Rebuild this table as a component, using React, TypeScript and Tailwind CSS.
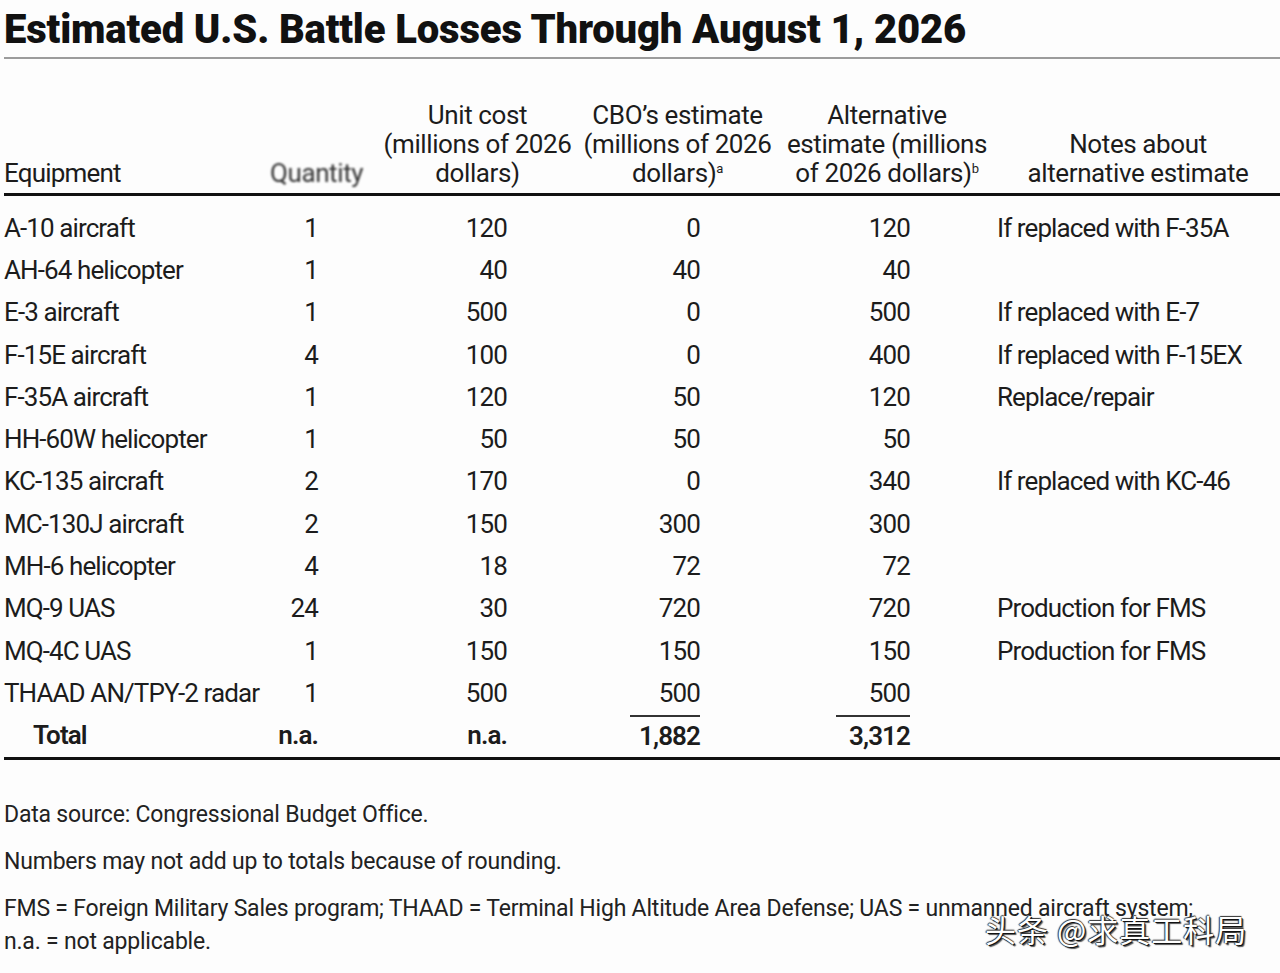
type Row = {
  name: string;
  qty: string;
  unit: string;
  cbo: string;
  alt: string;
  note?: string;
};

const rows: Row[] = [
  { name: "A-10 aircraft", qty: "1", unit: "120", cbo: "0", alt: "120", note: "If replaced with F-35A" },
  { name: "AH-64 helicopter", qty: "1", unit: "40", cbo: "40", alt: "40" },
  { name: "E-3 aircraft", qty: "1", unit: "500", cbo: "0", alt: "500", note: "If replaced with E-7" },
  { name: "F-15E aircraft", qty: "4", unit: "100", cbo: "0", alt: "400", note: "If replaced with F-15EX" },
  { name: "F-35A aircraft", qty: "1", unit: "120", cbo: "50", alt: "120", note: "Replace/repair" },
  { name: "HH-60W helicopter", qty: "1", unit: "50", cbo: "50", alt: "50" },
  { name: "KC-135 aircraft", qty: "2", unit: "170", cbo: "0", alt: "340", note: "If replaced with KC-46" },
  { name: "MC-130J aircraft", qty: "2", unit: "150", cbo: "300", alt: "300" },
  { name: "MH-6 helicopter", qty: "4", unit: "18", cbo: "72", alt: "72" },
  { name: "MQ-9 UAS", qty: "24", unit: "30", cbo: "720", alt: "720", note: "Production for FMS" },
  { name: "MQ-4C UAS", qty: "1", unit: "150", cbo: "150", alt: "150", note: "Production for FMS" },
  { name: "THAAD AN/TPY-2 radar", qty: "1", unit: "500", cbo: "500", alt: "500" },
];

const grid = "grid grid-cols-[266px_108px_199px_201px_218px_284px]";

export default function App() {
  return (
    <div
      className="relative min-h-[973px] w-[1280px] overflow-hidden bg-[#fdfdfd] pl-[4px] text-[#1c1c1c]"
      style={{ fontFamily: "Roboto, 'Noto Sans CJK SC', sans-serif" }}
    >
      <h1 className="pt-[6px] text-[40px] font-black leading-[48px] tracking-[-0.15px] text-[#111] whitespace-nowrap">
        Estimated U.S. Battle Losses Through August 1, 2026
      </h1>
      <div className="mt-[3px] h-[2px] bg-[#9c9c9c]" />

      <div className={`${grid} h-[134px] items-end pb-[5px] text-[26px] leading-[29px] tracking-[-0.4px]`}>
        <div className="tracking-[-0.8px]">Equipment</div>
        <div className="pr-[16px] text-right">
          <span className="inline-block text-[#333] blur-[1.3px]">Quantity</span>
        </div>
        <div className="text-center">
          Unit cost
          <br />
          (millions of 2026
          <br />
          dollars)
        </div>
        <div className="text-center">
          CBO’s estimate
          <br />
          (millions of 2026
          <br />
          dollars)<span className="inline-block -translate-y-[9px] text-[13px] leading-none">a</span>
        </div>
        <div className="text-center">
          Alternative
          <br />
          estimate (millions
          <br />
          of 2026 dollars)<span className="inline-block -translate-y-[9px] text-[13px] leading-none">b</span>
        </div>
        <div className="text-center">
          Notes about
          <br />
          alternative estimate
        </div>
      </div>
      <div className="h-[3px] bg-[#111]" />

      <div className="pt-[11px] text-[26px] tracking-[-0.9px]">
        {rows.map((r) => (
          <div key={r.name} className={`${grid} h-[42.3px] items-center whitespace-nowrap`}>
            <div>{r.name}</div>
            <div className="pr-[60px] text-right">{r.qty}</div>
            <div className="pr-[70px] text-right">{r.unit}</div>
            <div className="pr-[78px] text-right">{r.cbo}</div>
            <div className="pr-[86px] text-right">{r.alt}</div>
            <div className="pl-[1px]">{r.note}</div>
          </div>
        ))}
        <div className={`${grid} h-[42.3px] items-stretch font-semibold`}>
          <div className="flex items-center pl-[29px]">Total</div>
          <div className="flex items-center justify-end pr-[60px]">n.a.</div>
          <div className="flex items-center justify-end pr-[70px]">n.a.</div>
          <div className="flex justify-end pr-[78px]">
            <div className="flex w-[70px] items-center justify-end border-t-2 border-[#333]">1,882</div>
          </div>
          <div className="flex justify-end pr-[86px]">
            <div className="flex w-[74px] items-center justify-end border-t-2 border-[#333]">3,312</div>
          </div>
          <div />
        </div>
      </div>
      <div className="h-[3px] bg-[#111]" />

      <div className="pt-[38px] text-[23px] leading-[33px] tracking-[-0.2px] text-[#222]">
        <p>Data source: Congressional Budget Office.</p>
        <p className="mt-[14px]">Numbers may not add up to totals because of rounding.</p>
        <p className="mt-[14px] whitespace-nowrap">
          FMS = Foreign Military Sales program; THAAD = Terminal High Altitude Area Defense; UAS = unmanned aircraft system;
          <br />
          n.a. = not applicable.
        </p>
      </div>

      <div
        className="absolute left-[985px] top-[909px] text-[31px] leading-[40px] tracking-[1px] text-white whitespace-nowrap"
        style={{
          fontFamily: "'Noto Sans CJK SC', sans-serif",
          textShadow: "1px 1px 0 #111, -1px 0 1px #333, 0 -1px 1px #333, 2px 2px 1px #555",
        }}
      >
        头条 @求真工科局
      </div>
    </div>
  );
}
